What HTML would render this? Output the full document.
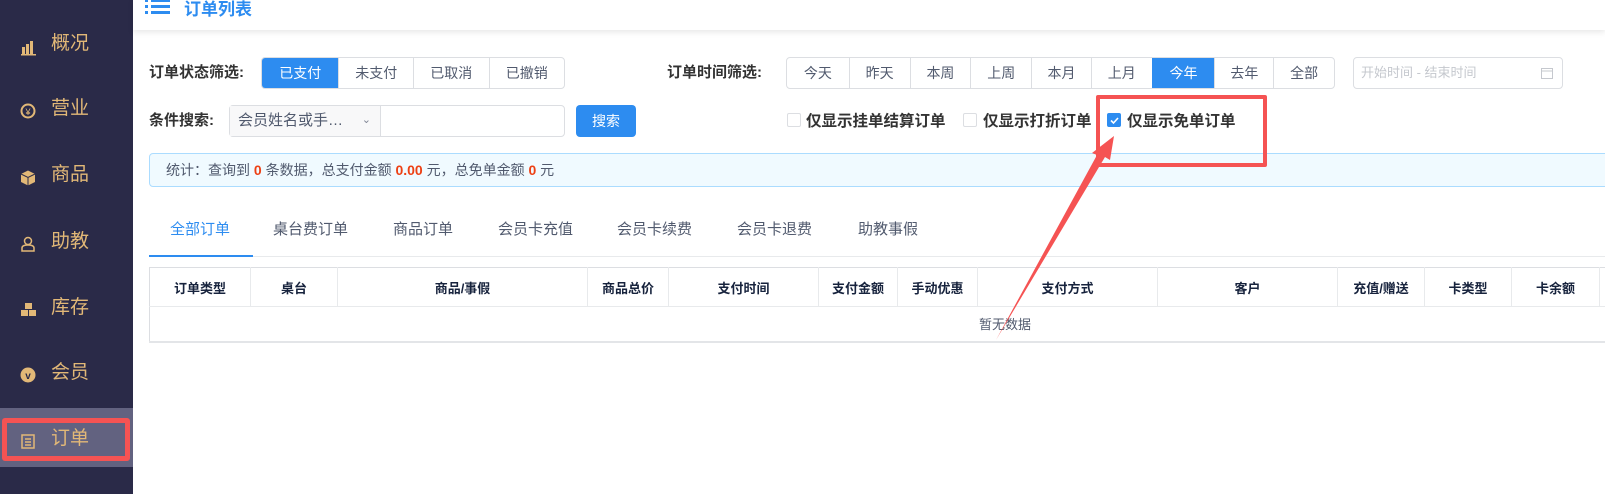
<!DOCTYPE html>
<html><head><meta charset="utf-8"><style>
*{box-sizing:border-box;margin:0;padding:0}
body{width:1605px;height:494px;overflow:hidden;background:#fff;font-family:"Liberation Sans","Noto Sans CJK SC",sans-serif;position:relative;color:#515a6e}
.a{position:absolute}
.side{left:0;top:0;width:133px;height:494px;background:#2a2a48}
.mi{position:absolute;left:0;width:133px;height:30px;color:#e2b877;font-size:19px;line-height:30px}
.mi span{position:absolute;left:51px}
.mi i{position:absolute;left:20px;top:7px;width:16px;height:16px;font-style:normal}
.hdr{left:133px;top:0;width:1472px;height:30px;background:#fff;box-shadow:0 2px 6px rgba(0,0,0,.1)}
.lbl{font-size:15px;font-weight:bold;color:#333;line-height:32px}
.bg{display:flex;border:1px solid #dcdee2;border-radius:4px;overflow:hidden;height:32px}
.bg div{border-left:1px solid #dcdee2;font-size:14px;color:#515a6e;text-align:center;line-height:30px}
.bg div:first-child{border-left:none}
.bg .on{background:#2d8cf0;color:#fff;border-color:#2d8cf0}
.cb{width:14px;height:14px;border:1px solid #dcdee2;border-radius:2px;background:#fff}
.ct{font-size:15.5px;font-weight:bold;color:#333}
.tab{font-size:15px;color:#515a6e;top:218px}
table{border-collapse:collapse;font-size:13px}
th{font-weight:bold;color:#17233d;border-right:1px solid #e8eaec;border-bottom:1px solid #e8eaec;height:39px;text-align:center}
</style></head><body>
<div class="a side"></div>
<div class="a" style="left:0;top:408px;width:133px;height:59px;background:#626280"></div>
<div class="mi" style="top:29px"><i><svg width="18" height="18"><rect x="2" y="9" width="3" height="8" fill="#e2b877"/><rect x="6" y="6" width="3" height="11" fill="#e2b877"/><rect x="10" y="3" width="3" height="14" fill="#e2b877"/><rect x="1" y="16" width="15" height="1.5" fill="#e2b877"/></svg></i><span>概况</span></div>
<div class="mi" style="top:94px"><i><svg width="18" height="18"><circle cx="8" cy="8" r="6.5" fill="none" stroke="#e2b877" stroke-width="2"/><text x="8" y="12" font-size="9" text-anchor="middle" fill="#e2b877">¥</text></svg></i><span>营业</span></div>
<div class="mi" style="top:160px"><i><svg width="18" height="18"><path d="M1 5l7-3.5 7 3.5v8l-7 3.5-7-3.5z" fill="#e2b877"/><path d="M1 5l7 3.5 7-3.5M8 8.5v8" stroke="#2a2a48" fill="none"/></svg></i><span>商品</span></div>
<div class="mi" style="top:227px"><i><svg width="18" height="18"><circle cx="8" cy="5" r="3.5" fill="none" stroke="#e2b877" stroke-width="1.5"/><path d="M2 15v-3q0-3 6-3t6 3v3z" fill="none" stroke="#e2b877" stroke-width="1.5"/></svg></i><span>助教</span></div>
<div class="mi" style="top:293px"><i><svg width="18" height="18"><rect x="5" y="1" width="7" height="6" fill="#e2b877"/><rect x="1" y="8" width="7" height="6" fill="#e2b877"/><rect x="9" y="8" width="7" height="6" fill="#e2b877"/></svg></i><span>库存</span></div>
<div class="mi" style="top:358px"><i><svg width="18" height="18"><circle cx="8" cy="8" r="7.5" fill="#e2b877"/><text x="8" y="12" font-size="10" font-weight="bold" text-anchor="middle" fill="#2a2a48">v</text></svg></i><span>会员</span></div>
<div class="mi" style="top:424px"><i><svg width="18" height="18"><rect x="2" y="2" width="12" height="13" fill="none" stroke="#e2b877" stroke-width="1.5"/><path d="M5 6h6M5 9h6M5 12h6" stroke="#e2b877" stroke-width="1.5"/></svg></i><span>订单</span></div>
<div class="a" style="left:2px;top:418px;width:128px;height:43px;border:5px solid #f55353;border-radius:3px"></div>

<div class="a hdr"></div>
<div class="a" style="left:145px;top:-2px"><svg width="26" height="18"><g fill="#2d8cf0"><rect x="0" y="1" width="3" height="3"/><rect x="0" y="7" width="3" height="3"/><rect x="0" y="13" width="3" height="3"/><rect x="6" y="1" width="19" height="3"/><rect x="6" y="7" width="19" height="3"/><rect x="6" y="13" width="19" height="3"/></g></svg></div>
<div class="a" style="left:184px;top:-5px;font-size:17px;color:#2d8cf0;font-weight:bold">订单列表</div>

<div class="a lbl" style="left:149px;top:57px">订单状态筛选:</div>
<div class="a bg" style="left:261px;top:57px;width:304px"><div class="on" style="width:77px">已支付</div><div style="width:75px">未支付</div><div style="width:76px">已取消</div><div style="width:76px">已撤销</div></div>
<div class="a lbl" style="left:667px;top:57px">订单时间筛选:</div>
<div class="a bg" style="left:786px;top:57px;width:549px"><div style="width:62px">今天</div><div style="width:61px">昨天</div><div style="width:61px">本周</div><div style="width:61px">上周</div><div style="width:60px">本月</div><div style="width:61px">上月</div><div class="on" style="width:63px">今年</div><div style="width:59px">去年</div><div style="width:61px">全部</div></div>
<div class="a" style="left:1353px;top:57px;width:210px;height:32px;border:1px solid #dcdee2;border-radius:4px;font-size:13px;color:#c5c8ce;line-height:30px;padding-left:7px">开始时间 - 结束时间<svg class="a" style="right:9px;top:9px" width="12" height="12"><rect x="0.5" y="1.5" width="11" height="10" fill="none" stroke="#c5c8ce"/><path d="M0 4h12" stroke="#c5c8ce"/></svg></div>

<div class="a lbl" style="left:149px;top:105px">条件搜索:</div>
<div class="a" style="left:229px;top:105px;width:336px;height:32px;border:1px solid #dcdee2;border-radius:4px;display:flex">
<div style="width:151px;background:#f8f8f9;border-right:1px solid #dcdee2;font-size:15px;color:#515a6e;line-height:30px;padding-left:8px;position:relative">会员姓名或手…<span style="position:absolute;right:9px;top:-1px;font-size:11px;color:#808695">&#8964;</span></div></div>
<div class="a" style="left:576px;top:105px;width:60px;height:32px;background:#2d8cf0;border-radius:4px;color:#fff;font-size:14px;text-align:center;line-height:32px">搜索</div>

<div class="a cb" style="left:787px;top:113px"></div><div class="a ct" style="left:806px;top:109px">仅显示挂单结算订单</div>
<div class="a cb" style="left:963px;top:113px"></div><div class="a ct" style="left:983px;top:109px">仅显示打折订单</div>
<div class="a cb" style="left:1107px;top:113px;background:#2d8cf0;border-color:#2d8cf0"><svg class="a" style="left:2px;top:2px" width="9" height="9"><path d="M1 4.5l2.5 2.5 4.5-5" stroke="#fff" stroke-width="1.6" fill="none"/></svg></div><div class="a ct" style="left:1127px;top:109px">仅显示免单订单</div>

<div class="a" style="left:149px;top:153px;width:1460px;height:34px;background:#f0faff;border:1px solid #abdcff;border-radius:4px;font-size:14px;line-height:32px;padding-left:16px;color:#515a6e">统计：查询到 <b style="color:#ed4014">0</b> 条数据，总支付金额 <b style="color:#ed4014">0.00</b> 元，总免单金额 <b style="color:#ed4014">0</b> 元</div>

<div class="a" style="left:1096px;top:95px;width:171px;height:72px;border:4px solid #f55353;border-radius:2px"></div>

<div class="a tab" style="left:170px;color:#2d8cf0">全部订单</div>
<div class="a tab" style="left:273px">桌台费订单</div>
<div class="a tab" style="left:393px">商品订单</div>
<div class="a tab" style="left:498px">会员卡充值</div>
<div class="a tab" style="left:617px">会员卡续费</div>
<div class="a tab" style="left:737px">会员卡退费</div>
<div class="a tab" style="left:858px">助教事假</div>
<div class="a" style="left:149px;top:256px;width:1456px;height:1px;background:#e8eaec"></div>
<div class="a" style="left:149px;top:255px;width:104px;height:2px;background:#2d8cf0"></div>

<table class="a" style="left:149px;top:267px;border:1px solid #dcdee2;border-bottom:2px solid #e3e5e8;width:1470px">
<tr><th style="width:101px">订单类型</th><th style="width:87px">桌台</th><th style="width:250px">商品/事假</th><th style="width:81px">商品总价</th><th style="width:150px">支付时间</th><th style="width:79px">支付金额</th><th style="width:80px">手动优惠</th><th style="width:180px">支付方式</th><th style="width:180px">客户</th><th style="width:87px">充值/赠送</th><th style="width:87px">卡类型</th><th style="width:88px">卡余额</th><th></th></tr>
<tr><td colspan="13" style="height:35px;text-align:left;padding-left:829px;color:#515a6e">暂无数据</td></tr>
</table>

<svg class="a" style="left:0;top:0" width="1605" height="494"><path d="M996 340 L1097 155 L1092 153 L1114 136 L1110 160 L1105 157 Z" fill="#f55353"/></svg>
</body></html>
